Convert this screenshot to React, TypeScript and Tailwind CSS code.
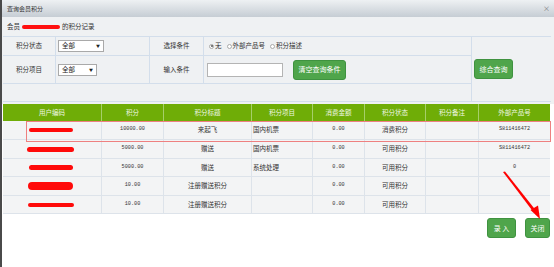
import React from 'react';

const rows = [
  { pts: '10000.00', title: '来起飞', item: '国内机票', amt: '0.00', status: '消费积分', ext: 'S811416472', h: 'h-[19px]', mark: 'w-[44px] h-[4px]' },
  { pts: '5000.00', title: '赠送', item: '国内机票', amt: '0.00', status: '可用积分', ext: 'S811416472', h: 'h-[19px]', mark: 'w-[47px] h-[5px]' },
  { pts: '5000.00', title: '赠送', item: '系统处理', amt: '0.00', status: '可用积分', ext: '0', h: 'h-[18px]', mark: 'w-[44px] h-[5px]' },
  { pts: '10.00', title: '注册赠送积分', item: '', amt: '0.00', status: '可用积分', ext: '', h: 'h-[19px]', mark: 'w-[45px] h-[8px]' },
  { pts: '10.00', title: '注册赠送积分', item: '', amt: '0.00', status: '可用积分', ext: '', h: 'h-[18px]', mark: 'w-[46px] h-[4px]' },
];

const heads = ['用户编码', '积分', '积分标题', '积分项目', '消费金额', '积分状态', '积分备注', '外部产品号'];

function Select({ w }: { w: string }) {
  return (
    <div className={`${w} h-[12px] bg-white border border-[#a9a9a9] flex items-center justify-between px-[3px] text-[6.5px] text-[#222]`}>
      <span>全部</span>
      <span className="text-[4px]">▼</span>
    </div>
  );
}

function Radio({ on, label }: { on?: boolean; label: string }) {
  return (
    <span className="flex items-center gap-[1px]">
      <span className="w-[5px] h-[5px] rounded-full border border-[#aaa] bg-white flex items-center justify-center">
        {on && <span className="w-[2px] h-[2px] rounded-full bg-[#555]" />}
      </span>
      <span>{label}</span>
    </span>
  );
}

function GreenBtn({ children, w }: { children: React.ReactNode; w: string }) {
  return (
    <div className={`${w} h-[20px] rounded-[3px] bg-[#4fa54b] border border-[#3f9240] text-white text-[7px] flex items-center justify-center`}>
      {children}
    </div>
  );
}

export default function App() {
  return (
    <div className="relative w-[554px] h-[267px] overflow-hidden bg-white border-l-2 border-[#4a4a4a] flex flex-col font-['Noto_Sans_CJK_SC',sans-serif] text-[#333]">
      <div className="h-[17px] shrink-0 bg-gradient-to-b from-[#eef1f3] to-[#c6cdd4] flex items-center justify-between pl-[5px] pr-[4px] text-[6px] text-[#333]">
        <span>查询会员积分</span>
        <span className="text-[7px] text-[#777]">×</span>
      </div>

      <div className="bg-[#eff1f3] pr-[2px]">
        <div className="h-[19px] flex items-center pl-[5px] text-[6.5px] gap-[1px]">
          <span>会员</span>
          <span className="w-[38px] h-[4px] rounded-full bg-[#ff1010] mx-[1px]" />
          <span>的积分记录</span>
        </div>

        <div className="ml-[1px] w-[548px] grid grid-cols-[53px_94px_54px_268px_79px] grid-rows-[19px_28px_17px] border-t border-b border-[#d3deeb] text-[6.5px]">
          <div className="border-r border-b border-[#d3deeb] flex items-center justify-center">积分状态</div>
          <div className="border-r border-b border-[#d3deeb] flex items-center pl-[2px]">
            <Select w="w-[46px]" />
          </div>
          <div className="border-r border-b border-[#d3deeb] flex items-center justify-center">选择条件</div>
          <div className="border-r border-b border-[#d3deeb] flex items-center pl-[5px] gap-[5px]">
            <Radio on label="无" />
            <Radio label="外部产品号" />
            <Radio label="积分描述" />
          </div>
          <div className="row-span-3 flex items-center pl-[2px]">
            <GreenBtn w="w-[39px]">综合查询</GreenBtn>
          </div>

          <div className="border-r border-b border-[#d3deeb] flex items-center justify-center">积分项目</div>
          <div className="border-r border-b border-[#d3deeb] flex items-center pl-[2px]">
            <Select w="w-[39px]" />
          </div>
          <div className="border-r border-b border-[#d3deeb] flex items-center justify-center">输入条件</div>
          <div className="border-r border-b border-[#d3deeb] flex items-center pl-[3px] gap-[10px]">
            <div className="w-[76px] h-[14px] bg-white border border-[#b4b4b4]" />
            <GreenBtn w="w-[53px]">清空查询条件</GreenBtn>
          </div>

          <div className="col-span-4 border-r border-[#d3deeb]" />
        </div>
        <div className="h-[2px]" />
      </div>

      <div className="ml-[1px] w-[547px]">
        <div className="h-[17px] grid grid-cols-[99px_62px_88px_61px_52px_61px_53px_71px] bg-[#6fad07] text-[#eef7e2] text-[6.5px]">
          {heads.map((h, i) => (
            <div key={h} className={`flex items-center justify-center ${i < 7 ? 'border-r border-[#a6cf6a]' : ''}`}>
              {h}
            </div>
          ))}
        </div>
        {rows.map((r, idx) => (
          <div
            key={idx}
            className={`${r.h} grid grid-cols-[99px_62px_88px_61px_52px_61px_53px_71px] bg-[#f3f4f5] border-b border-[#dde3ea] text-[6.5px]`}
          >
            <div className="border-r border-[#dde3ea] flex items-center justify-center pr-[3px]">
              <span className={`${r.mark} rounded-full bg-[#ff0a0a]`} />
            </div>
            <div className="border-r border-[#dde3ea] flex items-center justify-center font-['Liberation_Mono',monospace] text-[5.2px]">{r.pts}</div>
            <div className="border-r border-[#dde3ea] flex items-center justify-center">{r.title}</div>
            <div className="border-r border-[#dde3ea] flex items-center pl-[1px]">{r.item}</div>
            <div className="border-r border-[#dde3ea] flex items-center justify-center font-['Liberation_Mono',monospace] text-[5.2px]">{r.amt}</div>
            <div className="border-r border-[#dde3ea] flex items-center justify-center">{r.status}</div>
            <div className="border-r border-[#dde3ea]" />
            <div className="flex items-center justify-center font-['Liberation_Mono',monospace] text-[5.2px]">{r.ext}</div>
          </div>
        ))}
      </div>

      <div className="flex justify-end gap-[9px] pr-[4px] pt-[4px]">
        <GreenBtn w="w-[29px]">录&nbsp;入</GreenBtn>
        <GreenBtn w="w-[25px]">关闭</GreenBtn>
      </div>

      <div className="absolute left-[24px] top-[121px] w-[525px] h-[21px] border border-[#ee8080] pointer-events-none" />

      <svg className="absolute left-0 top-0 pointer-events-none" width="554" height="267" viewBox="0 0 554 267">
        <path d="M501 172 L503 171.5 L533.5 210 L531 211.5 Z" fill="#ff0000" />
        <path d="M528.5 210 L536 205.5 L538 219 Z" fill="#ff0000" />
      </svg>
    </div>
  );
}
